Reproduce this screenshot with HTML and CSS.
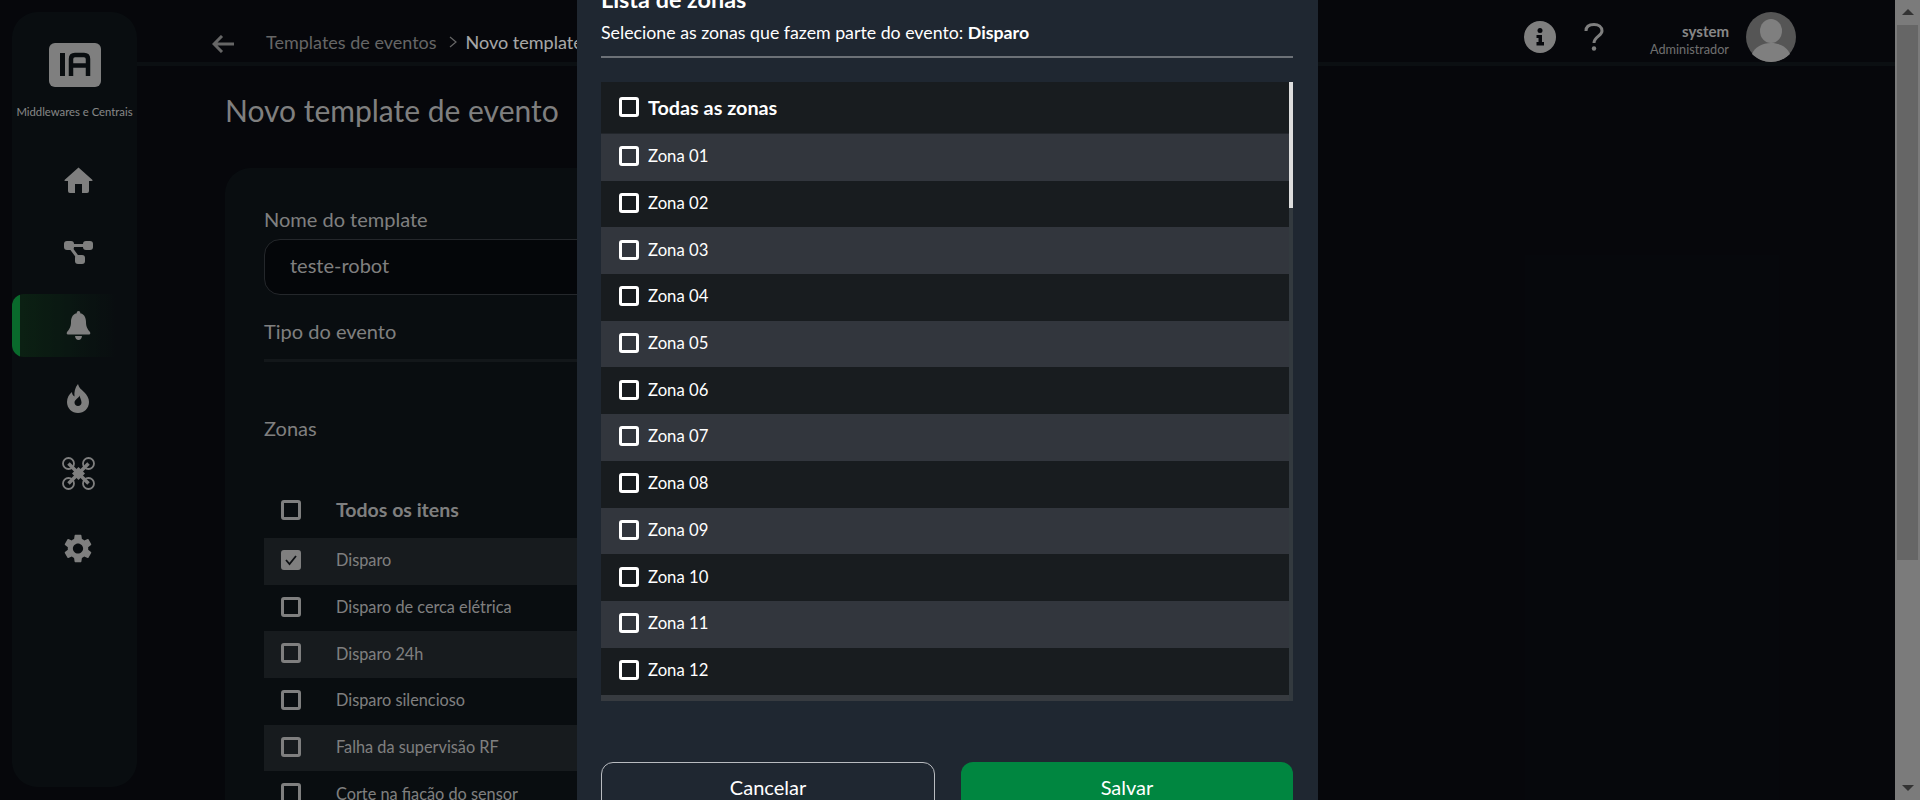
FILE: index.html
```html
<!DOCTYPE html>
<html lang="pt-BR">
<head>
    <meta charset="UTF-8">
    <title>Novo template de evento</title>
    <link rel="stylesheet" href="styles.css">
</head>
<body>
    <div class="viewport">
        <div class="app">
            <aside class="sidebar">
                <svg class="logo" viewBox="0 0 52 44">
                    <rect width="52" height="44" rx="6" fill="#b7b7b7"/>
                    <rect x="11" y="10" width="5" height="23" fill="#0e1418"/>
                    <path d="M22 33V16Q22 12 26 12H35Q39 12 39 16V33M22 22.5H39" fill="none" stroke="#0e1418" stroke-width="4.5"/>
                </svg>
                <div class="brand-name">Middlewares e Centrais</div>
                <nav class="side-nav">
                    <a class="side-item">
                        <svg width="29" height="26" viewBox="0 0 29 26"><path d="M14.5 0.5L28.5 13Q29 14 27.5 14H25V24Q25 26 23 26H18V17H11V26H6Q4 26 4 24V14H1.5Q0 14 0.5 13Z" fill="#b7b7b7"/></svg>
                    </a>
                    <a class="side-item">
                        <svg width="29" height="23" viewBox="0 0 29 23">
                            <path d="M5 4.5H24M5 4.5L15 18" fill="none" stroke="#b7b7b7" stroke-width="3"/>
                            <rect width="10" height="9" rx="3" fill="#b7b7b7"/>
                            <rect x="19" width="10" height="9" rx="3" fill="#b7b7b7"/>
                            <rect x="11" y="14" width="10" height="9" rx="3" fill="#b7b7b7"/>
                        </svg>
                    </a>
                    <a class="side-item active">
                        <svg width="25" height="29" viewBox="0 0 25 29">
                            <circle cx="12.5" cy="1.8" r="1.8" fill="#b7b7b7"/>
                            <path d="M12.5 2C7 2 5 6.5 5 11C5 16 3.5 18 1 21Q0 22.5 1.5 23.5H23.5Q25 22.5 24 21C21.5 18 20 16 20 11C20 6.5 18 2 12.5 2Z" fill="#b7b7b7"/>
                            <path d="M9 25H16Q15.5 29 12.5 29Q9.5 29 9 25Z" fill="#b7b7b7"/>
                        </svg>
                    </a>
                    <a class="side-item">
                        <svg width="22" height="29" viewBox="0 0 22 29">
                            <path fill-rule="evenodd" d="M11 0C12 4 14 5 17 8C20 11 22 14 22 18C22 24.5 17 29 11 29C5 29 0 24.5 0 18C0 13.5 2 10.5 5 8C5 10 6 12 7.5 12.5C7 8 8 3.5 11 0ZM12.5 11.5C12 14 7.5 15.5 7.5 18.5C7.5 20.5 9 22 11 22C13 22 14.5 20.5 14.5 18.5C14.5 16 13 14 12.5 11.5Z" fill="#b7b7b7"/>
                        </svg>
                    </a>
                    <a class="side-item drop">
                        <svg width="33" height="33" viewBox="0 0 33 33">
                            <g fill="none" stroke="#b7b7b7" stroke-width="1.8">
                                <circle cx="6.5" cy="6.5" r="5.5"/>
                                <circle cx="26.5" cy="6.5" r="5.5"/>
                                <circle cx="6.5" cy="26.5" r="5.5"/>
                                <circle cx="26.5" cy="26.5" r="5.5"/>
                            </g>
                            <path d="M6.5 6.5L26.5 26.5M26.5 6.5L6.5 26.5" stroke="#b7b7b7" stroke-width="3.5"/>
                            <path d="M16.5 10L23 16.5L16.5 23L10 16.5Z" fill="#b7b7b7"/>
                        </svg>
                    </a>
                    <a class="side-item drop">
                        <svg width="28" height="29" viewBox="2.3 1.8 19.4 20.4">
                            <path d="M19.14 12.94c.04-.3.06-.61.06-.94 0-.32-.02-.64-.07-.94l2.03-1.58c.18-.14.23-.41.12-.61l-1.92-3.32c-.12-.22-.37-.29-.59-.22l-2.39.96c-.5-.38-1.03-.7-1.62-.94l-.36-2.54c-.04-.24-.24-.41-.48-.41h-3.84c-.24 0-.43.17-.47.41l-.36 2.54c-.59.24-1.13.57-1.62.94l-2.39-.96c-.22-.08-.47 0-.59.22L2.74 8.87c-.12.21-.08.47.12.61l2.03 1.58c-.05.3-.09.63-.09.94s.02.64.07.94l-2.03 1.58c-.18.14-.23.41-.12.61l1.92 3.32c.12.22.37.29.59.22l2.39-.96c.5.38 1.03.7 1.62.94l.36 2.54c.05.24.24.41.48.41h3.84c.24 0 .44-.17.47-.41l.36-2.54c.59-.24 1.13-.56 1.62-.94l2.39.96c.22.08.47 0 .59-.22l1.92-3.32c.12-.22.07-.47-.12-.61l-2.01-1.58zM12 15.6c-1.98 0-3.6-1.62-3.6-3.6s1.62-3.6 3.6-3.6 3.6 1.62 3.6 3.6-1.62 3.6-3.6 3.6z" fill="#b7b7b7"/>
                        </svg>
                    </a>
                </nav>
            </aside>

            <main class="main">
                <header class="topbar">
                    <div class="breadcrumb">
                        <svg class="back" width="22" height="18" viewBox="0 0 22 18"><path d="M22 9H2M10 1L2 9L10 17" fill="none" stroke="#929292" stroke-width="3"/></svg>
                        <span class="crumb">Templates de eventos</span>
                        <svg class="crumb-sep" width="8" height="12" viewBox="0 0 8 12"><path d="M1 1L7 6L1 11" fill="none" stroke="#929292" stroke-width="1.2"/></svg>
                        <span class="crumb current">Novo template</span>
                    </div>
                    <div class="top-actions">
                        <svg width="32" height="32" viewBox="0 0 32 32">
                            <circle cx="16" cy="16" r="16" fill="#b7b7b7"/>
                            <circle cx="16" cy="9.5" r="2.5" fill="#090b11"/>
                            <path d="M12.5 14H18V21H20V24.5H12.5V21H14.5V17H12.5Z" fill="#090b11"/>
                        </svg>
                        <svg class="help" width="20" height="28" viewBox="0 0 20 28">
                            <path d="M2 8C2 3.5 5.5 1.5 10 1.5C14.5 1.5 18 4 18 8C18 13 10 13.5 10 20" fill="none" stroke="#b7b7b7" stroke-width="3"/>
                            <circle cx="10" cy="25.5" r="2.2" fill="#b7b7b7"/>
                        </svg>
                        <div class="user">
                            <div class="user-name">system</div>
                            <div class="user-role">Administrador</div>
                        </div>
                        <svg class="avatar" width="50" height="50" viewBox="0 0 50 50">
                            <circle cx="25" cy="25" r="25" fill="#7a7a7a"/>
                            <ellipse cx="25" cy="19" rx="11" ry="12" fill="#b7b7b7"/>
                            <path d="M6 42C9 35 16 31 25 31C34 31 41 35 44 42C39 47 32 50 25 50C18 50 11 47 6 42Z" fill="#b7b7b7"/>
                        </svg>
                    </div>
                </header>

                <h1 class="page-title">Novo template de evento</h1>

                <section class="card">
                    <label class="field-label">Nome do template</label>
                    <div class="text-input">teste-robot</div>
                    <label class="field-label type-label">Tipo do evento</label>
                    <div class="select-line"></div>
                    <div class="field-label zones-label">Zonas</div>

                    <div class="item-head">
                        <span class="check dim"></span>
                        <span>Todos os itens</span>
                    </div>
                    <div class="item odd"><span class="check dim checked"><svg width="14" height="12" viewBox="0 0 14 12"><path d="M2 6L5.5 10L12 2" fill="none" stroke="#14181c" stroke-width="1.8"/></svg></span><span>Disparo</span></div>
                    <div class="item"><span class="check dim"></span><span>Disparo de cerca elétrica</span></div>
                    <div class="item odd"><span class="check dim"></span><span>Disparo 24h</span></div>
                    <div class="item"><span class="check dim"></span><span>Disparo silencioso</span></div>
                    <div class="item odd"><span class="check dim"></span><span>Falha da supervisão RF</span></div>
                    <div class="item"><span class="check dim"></span><span>Corte na fiação do sensor</span></div>
                </section>
            </main>
        </div>

        <div class="backdrop">
            <div class="modal">
                <h2 class="modal-title">Lista de zonas</h2>
                <p class="modal-sub">Selecione as zonas que fazem parte do evento: <b>Disparo</b></p>

                <div class="zone-list">
                    <div class="zone-rows">
                        <div class="zone-head"><span class="check"></span><span>Todas as zonas</span></div>
                        <div class="zone odd"><span class="check"></span><span>Zona 01</span></div>
                        <div class="zone"><span class="check"></span><span>Zona 02</span></div>
                        <div class="zone odd"><span class="check"></span><span>Zona 03</span></div>
                        <div class="zone"><span class="check"></span><span>Zona 04</span></div>
                        <div class="zone odd"><span class="check"></span><span>Zona 05</span></div>
                        <div class="zone"><span class="check"></span><span>Zona 06</span></div>
                        <div class="zone odd"><span class="check"></span><span>Zona 07</span></div>
                        <div class="zone"><span class="check"></span><span>Zona 08</span></div>
                        <div class="zone odd"><span class="check"></span><span>Zona 09</span></div>
                        <div class="zone"><span class="check"></span><span>Zona 10</span></div>
                        <div class="zone odd"><span class="check"></span><span>Zona 11</span></div>
                        <div class="zone"><span class="check"></span><span>Zona 12</span></div>
                    </div>
                    <div class="zone-track"><div class="zone-thumb"></div></div>
                </div>

                <div class="modal-actions">
                    <button class="btn btn-cancel">Cancelar</button>
                    <button class="btn btn-save">Salvar</button>
                </div>
            </div>
        </div>
    </div>

    <div class="page-scroll">
        <span class="arrow-up"></span>
        <div class="page-thumb"></div>
        <span class="arrow-down"></span>
    </div>
</body>
</html>
```

FILE: styles.css
```css
* {
    margin: 0;
    padding: 0;
    box-sizing: border-box;
}

html {
    height: 800px;
    overflow: hidden;
}

body {
    display: flex;
    height: 800px;
    overflow: hidden;
    background: #090b11;
    font-family: 'Lato', 'Noto Sans', sans-serif;
}

.viewport {
    flex: 1;
    height: 800px;
    position: relative;
    overflow: hidden;
}

.app {
    display: flex;
    height: 800px;
}

/* Sidebar */
.sidebar {
    flex: none;
    width: 125px;
    height: 775px;
    margin: 12px 0 0 12px;
    padding-top: 31px;
    background: #0e1418;
    border-radius: 26px;
    display: flex;
    flex-direction: column;
    align-items: center;
}

.logo {
    width: 52px;
    height: 44px;
}

.brand-name {
    margin-top: 17px;
    color: #c0c0c0;
    font-size: 11.3px;
    line-height: 16px;
    white-space: nowrap;
}

.side-nav {
    width: 100%;
    margin-top: 28px;
    display: flex;
    flex-direction: column;
    gap: 10px;
}

.side-item {
    height: 63px;
    padding-left: 7px;
    display: flex;
    align-items: center;
    justify-content: center;
}

.side-item.drop {
    margin-top: 2px;
}

.side-item.active {
    border-radius: 12px 0 0 12px;
    background: linear-gradient(to right, #0e993f 0 8px, #102f1c 8px, #0e1418 83%);
}

/* Top bar */
.main {
    flex: 1;
    min-width: 0;
}

.topbar {
    height: 66px;
    padding: 12px 99px 0 75px;
    border-bottom: 4px solid #11161a;
    display: flex;
    align-items: flex-start;
}

.breadcrumb {
    margin-top: 19px;
    display: flex;
    align-items: center;
}

.back {
    margin: 3px 32px 0 0;
}

.crumb {
    color: #929292;
    font-size: 18px;
    white-space: nowrap;
}

.crumb.current {
    color: #f0f0f0;
}

.crumb-sep {
    margin: 0 9px 0 12px;
}

.top-actions {
    margin-left: auto;
    display: flex;
    align-items: center;
}

.help {
    margin-left: 28px;
}

.user {
    margin: 3px 17px 0 auto;
    width: 125px;
    text-align: right;
}

.user-name {
    color: #c2c2c2;
    font-size: 15px;
    font-weight: 700;
    line-height: 20px;
}

.user-role {
    color: #a0a0a0;
    font-size: 12.7px;
    line-height: 16px;
}

/* Form card */
.page-title {
    margin: 22px 0 0 88px;
    color: #b7b7b7;
    font-size: 30px;
    font-weight: 400;
    line-height: 44px;
}

.card {
    width: 1060px;
    height: 700px;
    margin: 36px 0 0 88px;
    padding: 39px 39px;
    background: #0e1418;
    border-radius: 26px;
}

.field-label {
    display: block;
    color: #b7b7b7;
    font-size: 20px;
    line-height: 24px;
}

.text-input {
    height: 56px;
    margin-top: 8px;
    padding-left: 25px;
    background: #07090d;
    border: 1px solid #34383e;
    border-radius: 16px;
    color: #b7b7b7;
    font-size: 20px;
    line-height: 50px;
}

.type-label {
    margin-top: 24px;
}

.select-line {
    height: 19px;
    border-bottom: 3px solid #1c2126;
}

.zones-label {
    margin-top: 54px;
}

.item-head,
.item {
    display: flex;
    align-items: center;
    gap: 35px;
    padding: 0 0 3px 17px;
    color: #b7b7b7;
    font-size: 16.3px;
}

.item-head {
    height: 54px;
    margin-top: 44px;
    font-size: 19.5px;
    font-weight: 700;
}

.item {
    height: 46.7px;
}

.item.odd {
    background: #22282c;
}

.check {
    flex: none;
    width: 20px;
    height: 20px;
    border: 3px solid #fff;
    border-radius: 3px;
    display: flex;
    align-items: center;
    justify-content: center;
}

.check.dim {
    border-color: #b7b7b7;
}

.check.checked {
    background: #b7b7b7;
}

/* Modal */
.backdrop {
    position: absolute;
    inset: 0;
    background: rgba(0, 0, 0, 0.3);
    display: flex;
    justify-content: center;
    align-items: flex-start;
}

.modal {
    width: 741px;
    margin-top: -40px;
    padding: 24px 25px 40px 24px;
    background: #1f2731;
    color: #fff;
}

.modal-title {
    font-size: 23.4px;
    font-weight: 700;
    line-height: 30px;
}

.modal-sub {
    margin-top: 6px;
    padding-bottom: 12px;
    border-bottom: 2px solid #6c7177;
    font-size: 17.75px;
    line-height: 24px;
}

.zone-list {
    display: flex;
    height: 619px;
    margin-top: 24px;
}

.zone-rows {
    flex: 1;
    background: #181c1f;
    border-bottom: 6px solid #373b40;
}

.zone-head,
.zone {
    display: flex;
    align-items: center;
    gap: 9px;
    padding: 0 0 2px 18px;
    background: #181c1f;
    font-size: 16.7px;
}

.zone-head {
    height: 52px;
    border-bottom: 1px solid #22262b;
    font-size: 19.8px;
    font-weight: 700;
}

.zone {
    height: 46.7px;
}

.zone.odd {
    background: #32363d;
}

.zone-track {
    flex: none;
    width: 4px;
    background: #333a3f;
}

.zone-thumb {
    height: 126px;
    background: #dddddd;
}

.modal-actions {
    display: flex;
    gap: 26px;
    margin-top: 61px;
}

.btn {
    flex: 1;
    height: 54px;
    padding-bottom: 5px;
    border-radius: 12px;
    color: #fff;
    font-family: inherit;
    font-size: 20px;
}

.btn-cancel {
    background: transparent;
    border: 1px solid #b9bcc0;
}

.btn-save {
    background: #008640;
    border: none;
}

/* Browser scrollbar */
.page-scroll {
    flex: none;
    width: 25px;
    height: 800px;
    padding: 9px 2px;
    background: #7b7b7b;
    display: flex;
    flex-direction: column;
    align-items: center;
}

.arrow-up,
.arrow-down {
    flex: none;
    width: 0;
    height: 0;
    border-left: 6px solid transparent;
    border-right: 6px solid transparent;
}

.arrow-up {
    border-bottom: 6px solid #333;
}

.arrow-down {
    margin-top: auto;
    border-top: 6px solid #333;
}

.page-thumb {
    width: 21px;
    height: 535px;
    margin-top: 10px;
    background: #666;
}
```
